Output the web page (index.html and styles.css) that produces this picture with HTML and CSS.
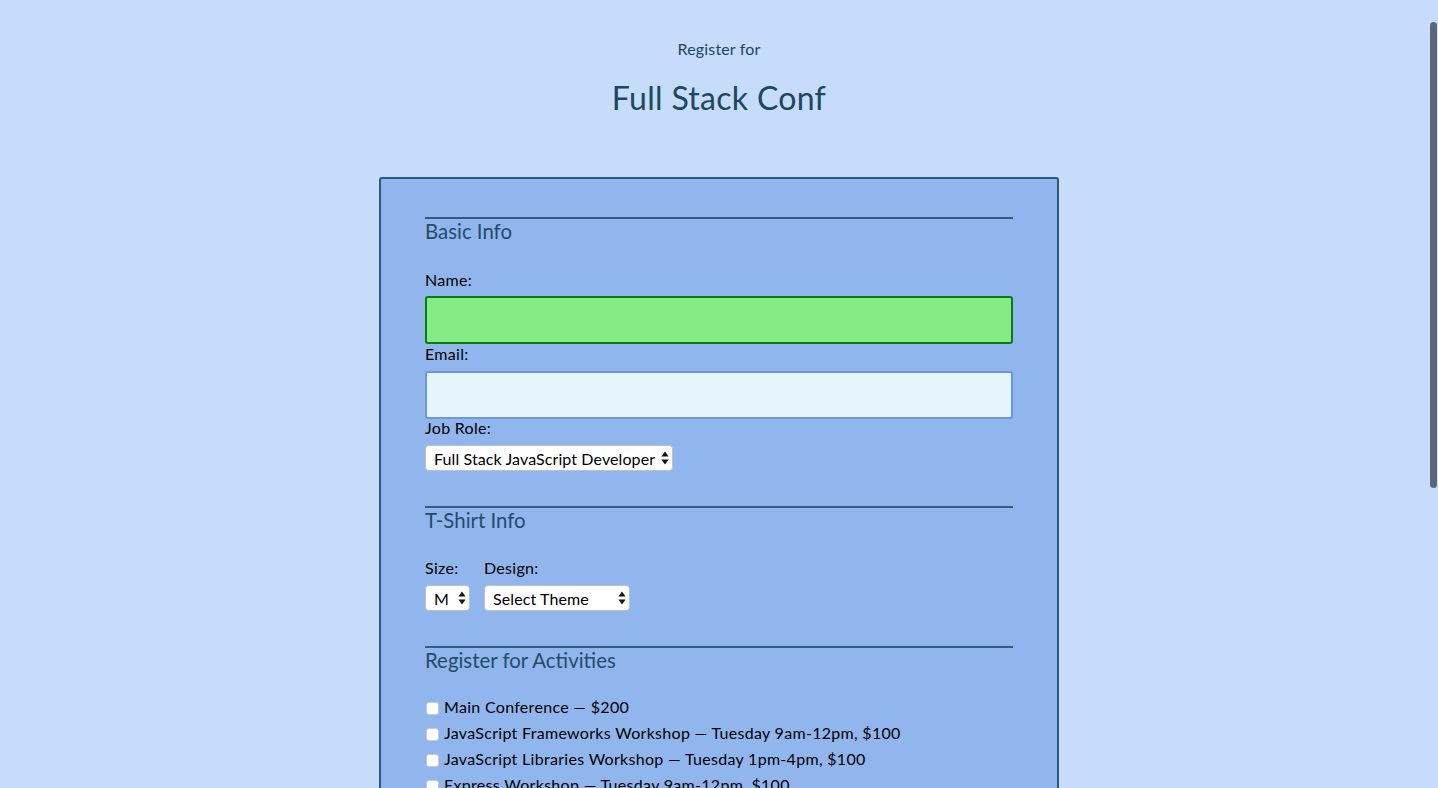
FILE: index.html
```html
<!DOCTYPE html>
<html lang="en">
<head>
<meta charset="utf-8">
<title>Full Stack Conf</title>
<link rel="stylesheet" href="styles.css">
</head>
<body>
<header class="page-header">
  <p class="kicker">Register for</p>
  <h1 class="title">Full Stack Conf</h1>
</header>

<form class="card">
  <section class="section">
    <h2 class="legend">Basic Info</h2>
    <label class="label" for="name">Name:</label>
    <input class="text-input valid" id="name" type="text">
    <label class="label" for="mail">Email:</label>
    <input class="text-input" id="mail" type="email">
    <label class="label" for="title">Job Role:</label>
    <span class="select-wrap role">
      <select class="select" id="title">
        <option>Full Stack JavaScript Developer</option>
        <option>Front End Developer</option>
        <option>Back End Developer</option>
        <option>Designer</option>
        <option>Student</option>
        <option>Other</option>
      </select>
      <svg class="arrows" width="8" height="14" viewBox="0 0 8 14"><path d="M4 0.5 L7.6 5.6 H0.4 Z M4 13.5 L7.6 8.4 H0.4 Z" fill="#111"/></svg>
    </span>
  </section>

  <section class="section">
    <h2 class="legend">T-Shirt Info</h2>
    <div class="shirt-row">
      <div class="shirt-col">
        <label class="label" for="size">Size:</label>
        <span class="select-wrap size">
          <select class="select" id="size">
            <option>S</option>
            <option selected>M</option>
            <option>L</option>
            <option>XL</option>
          </select>
          <svg class="arrows" width="8" height="14" viewBox="0 0 8 14"><path d="M4 0.5 L7.6 5.6 H0.4 Z M4 13.5 L7.6 8.4 H0.4 Z" fill="#111"/></svg>
        </span>
      </div>
      <div class="shirt-col">
        <label class="label" for="design">Design:</label>
        <span class="select-wrap design">
          <select class="select" id="design">
            <option>Select Theme</option>
            <option>Theme - JS Puns</option>
            <option>Theme - I &#9829; JS</option>
          </select>
          <svg class="arrows" width="8" height="14" viewBox="0 0 8 14"><path d="M4 0.5 L7.6 5.6 H0.4 Z M4 13.5 L7.6 8.4 H0.4 Z" fill="#111"/></svg>
        </span>
      </div>
    </div>
  </section>

  <section class="section activities">
    <h2 class="legend">Register for Activities</h2>
    <label class="check"><input class="box" type="checkbox" name="all"> Main Conference — $200</label>
    <label class="check"><input class="box" type="checkbox" name="js-frameworks"> JavaScript Frameworks Workshop — Tuesday 9am-12pm, $100</label>
    <label class="check"><input class="box" type="checkbox" name="js-libs"> JavaScript Libraries Workshop — Tuesday 1pm-4pm, $100</label>
    <label class="check"><input class="box" type="checkbox" name="express"> Express Workshop — Tuesday 9am-12pm, $100</label>
    <label class="check"><input class="box" type="checkbox" name="node"> Node.js Workshop — Tuesday 1pm-4pm, $100</label>
    <label class="check"><input class="box" type="checkbox" name="build-tools"> Build tools Workshop — Wednesday 9am-12pm, $100</label>
    <label class="check"><input class="box" type="checkbox" name="npm"> npm Workshop — Wednesday 1pm-4pm, $100</label>
  </section>

  <section class="section">
    <h2 class="legend">Payment Info</h2>
    <label class="label" for="payment">I'm going to pay with:</label>
    <span class="select-wrap design">
      <select class="select" id="payment">
        <option>Credit Card</option>
        <option>PayPal</option>
        <option>Bitcoin</option>
      </select>
      <svg class="arrows" width="8" height="14" viewBox="0 0 8 14"><path d="M4 0.5 L7.6 5.6 H0.4 Z M4 13.5 L7.6 8.4 H0.4 Z" fill="#111"/></svg>
    </span>
  </section>

  <button class="submit" type="submit">Register</button>
</form>

<div class="scroll-thumb"></div>
</body>
</html>
```

FILE: styles.css
```css
html {
  scrollbar-width: none;
}
html::-webkit-scrollbar {
  display: none;
}
body {
  margin: 0;
  background: #c6dcfa;
  font-family: "Lato", "Noto Sans", sans-serif;
  color: #000;
}

.page-header {
  text-align: center;
  color: #1b4860;
  padding-top: 39px;
}
.kicker {
  margin: 0;
  font-size: 16px;
  line-height: 20px;
  letter-spacing: 0.15px;
}
.title {
  margin: 20px 0 0;
  font-size: 32px;
  font-weight: 400;
  line-height: 38px;
  letter-spacing: 0.3px;
}

.card {
  width: 588px;
  margin: 60px auto 40px;
  padding: 38px 44px 40px;
  background: #91b5ed;
  border: 2px solid #2b5a7d;
  border-radius: 3px;
}

.section {
  border-top: 2px solid #2f5f80;
  margin-bottom: 35px;
}
.legend {
  margin: 0 0 26px;
  font-size: 20.4px;
  font-weight: 400;
  line-height: 24px;
  color: #234d68;
}

.label {
  display: block;
  font-size: 16px;
  line-height: 19px;
  margin-bottom: 8px;
  letter-spacing: 0.3px;
}
.label[for="name"] {
  padding-top: 1px;
  margin-bottom: 7px;
}
.label[for="title"] {
  margin-top: -1px;
}

.text-input {
  display: block;
  box-sizing: border-box;
  width: 100%;
  height: 48px;
  margin: 0;
  border: 2px solid #6b98dc;
  border-radius: 3px;
  background: #e6f5fb;
  font: inherit;
}
.text-input.valid {
  background: #85eb85;
  border-color: #0c7a0c;
}

.select-wrap {
  position: relative;
  display: inline-block;
  vertical-align: top;
}
.select {
  -webkit-appearance: none;
  appearance: none;
  box-sizing: border-box;
  height: 26px;
  margin: 0;
  padding: 0 0 0 8px;
  background: #fff;
  border: 1px solid #b9c3cf;
  border-radius: 4px;
  font-family: inherit;
  font-size: 16px;
  letter-spacing: 0.1px;
  color: #000;
}
.role .select { width: 248px; }
.size .select { width: 45px; }
.design .select { width: 146px; }
.arrows {
  position: absolute;
  right: 4px;
  top: 6px;
  pointer-events: none;
}

.shirt-row {
  display: flex;
  gap: 14px;
}

.activities .legend {
  margin-bottom: 22px;
}
.check {
  display: flex;
  align-items: center;
  gap: 5px;
  font-size: 16px;
  line-height: 26px;
  letter-spacing: 0.3px;
}
.box {
  -webkit-appearance: none;
  appearance: none;
  width: 13px;
  height: 13px;
  margin: 3px 0 0 1px;
  background: #fff;
  border: 1px solid #c8ccd2;
  border-radius: 3px;
  flex: none;
}

.submit {
  font: inherit;
  font-size: 16px;
  padding: 10px 22px;
  background: #22627e;
  color: #fff;
  border: 0;
  border-radius: 4px;
}

.scroll-thumb {
  position: fixed;
  top: 22px;
  right: 1px;
  width: 7px;
  height: 466px;
  border-radius: 4px;
  background: #5b6677;
}
```
